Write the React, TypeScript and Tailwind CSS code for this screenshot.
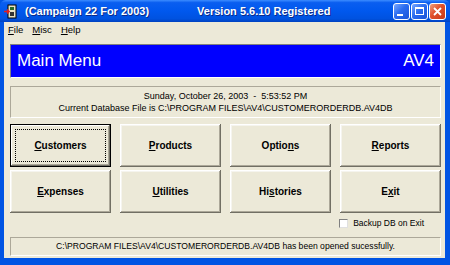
import React from 'react';

const FONT = { fontFamily: '"Liberation Sans", Arial, sans-serif' };

const Accel = ({ text, at }: { text: string; at: number }) => (
  <span>
    {text.slice(0, at)}
    <span className="underline underline-offset-[1px]">{text.charAt(at)}</span>
    {text.slice(at + 1)}
  </span>
);

const MenuButton = ({ label, at, focus }: { label: string; at: number; focus?: boolean }) => (
  <div
    className={`h-[43px] flex items-center justify-center bg-[#ece9d8] text-[10px] font-bold text-black ${
      focus
        ? 'border border-black shadow-[inset_-1px_-1px_#716f64,inset_1px_1px_#fff,inset_-2px_-2px_#aca899]'
        : 'shadow-[inset_-1px_-1px_#716f64,inset_1px_1px_#fff,inset_-2px_-2px_#aca899,inset_2px_2px_#f5f4ee]'
    }`}
  >
    {focus ? (
      <div className="w-[calc(100%-8px)] h-[calc(100%-8px)] border border-dotted border-black flex items-center justify-center">
        <Accel text={label} at={at} />
      </div>
    ) : (
      <Accel text={label} at={at} />
    )}
  </div>
);

const AppIcon = () => (
  <svg width="14" height="15" viewBox="0 0 14 15">
    <rect x="4" y="1" width="8" height="13" fill="#e8e4c8" stroke="#000" strokeWidth="1" />
    <rect x="6" y="3" width="4" height="3" fill="#2a6a2a" />
    <rect x="6" y="8" width="4" height="4" fill="#333" />
    <path d="M0 7.5 L5 7.5 M3 5.5 L5 7.5 L3 9.5" stroke="#e02020" strokeWidth="1.6" fill="none" />
  </svg>
);

const TitleButton = ({ kind }: { kind: 'min' | 'max' | 'close' }) => (
  <div
    className={`w-[17px] h-[17px] rounded-[3px] border border-white flex items-center justify-center ${
      kind === 'close'
        ? 'bg-[linear-gradient(135deg,#f0a080_0%,#e0502a_45%,#c83a18_100%)]'
        : 'bg-[linear-gradient(135deg,#7aa8ff_0%,#2a6cf0_45%,#1a52d8_100%)]'
    }`}
  >
    {kind === 'min' && <div className="w-[6px] h-[2px] bg-white mt-[8px] -ml-[3px]" />}
    {kind === 'max' && <div className="w-[9px] h-[8px] border border-white border-t-2" />}
    {kind === 'close' && (
      <svg width="9" height="9" viewBox="0 0 9 9">
        <path d="M1 1 L8 8 M8 1 L1 8" stroke="#fff" strokeWidth="1.8" />
      </svg>
    )}
  </div>
);

export default function App() {
  return (
    <div className="w-[450px] h-[265px] flex flex-col bg-[#0054e3] overflow-hidden" style={FONT}>
      {/* title bar */}
      <div className="h-[22px] flex items-center pl-[4px] pr-[4px] bg-[linear-gradient(180deg,#3c8cff_0%,#0a5ef0_12%,#0058ee_50%,#0052e0_85%,#0042c0_100%)] rounded-t-[6px]">
        <AppIcon />
        <span className="ml-[7px] text-white font-bold text-[11px] [text-shadow:1px_1px_#0a2a8a]">
          (Campaign 22 For 2003)
        </span>
        <span className="ml-[48px] text-white font-bold text-[11px] [text-shadow:1px_1px_#0a2a8a]">
          Version 5.6.10 Registered
        </span>
        <div className="ml-auto flex gap-[1px]">
          <TitleButton kind="min" />
          <TitleButton kind="max" />
          <TitleButton kind="close" />
        </div>
      </div>

      {/* client */}
      <div className="flex-1 flex flex-col bg-[#ece9d8] ml-[4px] mr-[5px] mb-[7px]">
        <div className="h-[16px] flex items-center gap-[9px] pl-[4px] text-[9.5px] text-black">
          <Accel text="File" at={0} />
          <Accel text="Misc" at={0} />
          <Accel text="Help" at={0} />
        </div>

        <div className="flex flex-col pl-[6px] pr-[4px] pt-[6px]">
          <div className="h-[34px] flex items-center justify-between px-[6px] bg-[#0000ff] border-t border-l border-[#808080] border-b border-r border-b-white border-r-white text-white text-[17px]">
            <span>Main Menu</span>
            <span>AV4</span>
          </div>

          <div className="mt-[8px] h-[32px] flex flex-col items-center justify-center border border-t-[#aca899] border-l-[#aca899] border-b-white border-r-white text-[9px] leading-[12px] text-black">
            <span>Sunday, October 26, 2003&nbsp; -&nbsp; 5:53:52 PM</span>
            <span>Current Database File is C:\PROGRAM FILES\AV4\CUSTOMERORDERDB.AV4DB</span>
          </div>

          <div className="mt-[6px] grid grid-cols-4 gap-x-[9px] gap-y-[3px]">
            <MenuButton label="Customers" at={0} focus />
            <MenuButton label="Products" at={0} />
            <MenuButton label="Options" at={5} />
            <MenuButton label="Reports" at={0} />
            <MenuButton label="Expenses" at={0} />
            <MenuButton label="Utilities" at={0} />
            <MenuButton label="Histories" at={2} />
            <MenuButton label="Exit" at={1} />
          </div>

          <div className="h-[16px] mt-[2px] flex items-center justify-end pr-[17px] gap-[5px] text-[8.5px] text-black">
            <div className="w-[9px] h-[9px] bg-white border border-t-[#808080] border-l-[#808080] border-b-[#e0e0e0] border-r-[#e0e0e0]" />
            <span>Backup DB on Exit</span>
          </div>

          <div className="mt-[6px] h-[19px] flex items-center justify-center border border-t-[#aca899] border-l-[#aca899] border-b-white border-r-white text-[8.6px] text-black">
            C:\PROGRAM FILES\AV4\CUSTOMERORDERDB.AV4DB has been opened sucessfully.
          </div>
        </div>
      </div>
    </div>
  );
}
